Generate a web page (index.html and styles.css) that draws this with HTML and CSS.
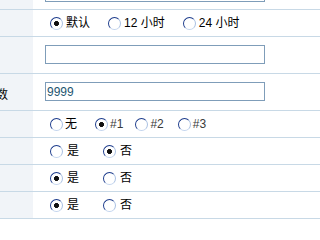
FILE: index.html
```html
<!DOCTYPE html>
<html lang="zh">
<head>
<meta charset="utf-8">
<title>设置</title>
<link rel="stylesheet" href="styles.css">
</head>
<body>
<div class="form">
  <div class="row first">
    <div class="label"></div>
    <div class="value"><input class="field" type="text" value=""></div>
  </div>
  <div class="row short">
    <div class="label"></div>
    <div class="value opts opts-time">
      <label class="opt"><input type="radio" name="t" class="radio" checked><span>默认</span></label>
      <label class="opt"><input type="radio" name="t" class="radio"><span>12 小时</span></label>
      <label class="opt"><input type="radio" name="t" class="radio"><span>24 小时</span></label>
    </div>
  </div>
  <div class="row tall">
    <div class="label"></div>
    <div class="value"><input class="field" type="text" value=""></div>
  </div>
  <div class="row tall">
    <div class="label"><span class="label-text">显示条数</span></div>
    <div class="value"><input class="field" type="text" value="9999"></div>
  </div>
  <div class="row short">
    <div class="label"></div>
    <div class="value opts opts-num">
      <label class="opt"><input type="radio" name="n" class="radio"><span>无</span></label>
      <label class="opt"><input type="radio" name="n" class="radio" checked><span class="gray">#1</span></label>
      <label class="opt"><input type="radio" name="n" class="radio"><span class="gray">#2</span></label>
      <label class="opt"><input type="radio" name="n" class="radio"><span class="gray">#3</span></label>
    </div>
  </div>
  <div class="row short">
    <div class="label"></div>
    <div class="value opts opts-yn">
      <label class="opt"><input type="radio" name="a" class="radio"><span>是</span></label>
      <label class="opt"><input type="radio" name="a" class="radio" checked><span>否</span></label>
    </div>
  </div>
  <div class="row short">
    <div class="label"></div>
    <div class="value opts opts-yn">
      <label class="opt"><input type="radio" name="b" class="radio" checked><span>是</span></label>
      <label class="opt"><input type="radio" name="b" class="radio"><span>否</span></label>
    </div>
  </div>
  <div class="row short">
    <div class="label"></div>
    <div class="value opts opts-yn">
      <label class="opt"><input type="radio" name="c" class="radio" checked><span>是</span></label>
      <label class="opt"><input type="radio" name="c" class="radio"><span>否</span></label>
    </div>
  </div>
</div>
</body>
</html>
```

FILE: styles.css
```css
html, body {
  margin: 0;
  padding: 0;
  background: #ffffff;
  overflow: hidden;
}

body {
  font-family: "Liberation Sans", "Noto Sans CJK SC", sans-serif;
  font-size: 12px;
  color: #000;
}

.form {
  margin-top: -26px;
  margin-left: -44px;
}

.row {
  display: flex;
  border-bottom: 1px solid #c8d9e6;
}

.label {
  width: 77px;
  flex: none;
  background: #f1f4f8;
  box-sizing: border-box;
  padding-left: 4px;
}

.label-text {
  display: block;
  padding-top: 14px;
  line-height: 14px;
  white-space: nowrap;
}

.value {
  flex: 1;
  display: flex;
  box-sizing: border-box;
  padding-left: 12px;
}

.row.first .value {
  height: 35px;
  padding-top: 9px;
  align-items: flex-start;
}

.row.tall .value {
  height: 36px;
  padding-top: 8px;
  align-items: flex-start;
}

.row.short .value {
  height: 26px;
  align-items: center;
}

.field {
  width: 220px;
  height: 19px;
  box-sizing: border-box;
  margin: 0;
  padding: 0 0 0 1px;
  border: 1px solid #7f9db9;
  font-family: "Liberation Sans", sans-serif;
  font-size: 12px;
  color: #1e5670;
  background: #fff;
  outline: none;
}

.opts {
  padding-left: 17px;
}

.opt {
  display: flex;
  align-items: center;
  gap: 3px;
  line-height: 14px;
  white-space: nowrap;
}

.radio {
  -webkit-appearance: none;
  appearance: none;
  margin: 0;
  width: 13px;
  height: 13px;
  box-sizing: border-box;
  border-radius: 50%;
  border: 1px solid;
  border-color: #1d3c8c #a9c0e2 #c4d5ee #1d3c8c;
  background: #fff;
  flex: none;
}

.radio:checked {
  background: radial-gradient(circle, #111 0, #111 2.2px, #fff 2.8px);
}

.gray {
  color: #3a3a3a;
}

.opts-time .opt + .opt {
  margin-left: 18px;
}

.opts-num .opt {
  gap: 2px;
}

.opts-num .opt:nth-child(2) {
  margin-left: 18px;
}

.opts-num .opt:nth-child(3) {
  margin-left: 12px;
}

.opts-num .opt:nth-child(4) {
  margin-left: 14px;
}

.opts-yn .opt {
  gap: 4px;
}

.opts-yn .opt + .opt {
  margin-left: 24px;
}
```
